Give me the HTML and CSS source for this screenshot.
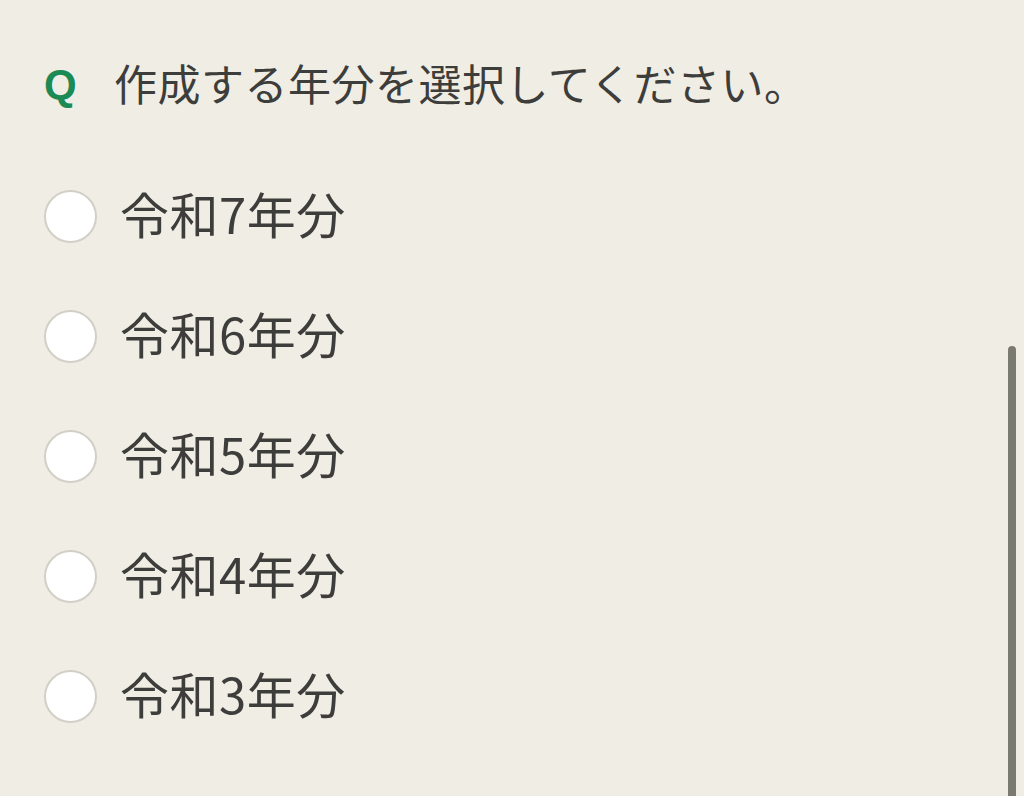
FILE: index.html
```html
<!DOCTYPE html>
<html lang="ja">
<head>
<meta charset="utf-8">
<title>作成する年分</title>
<link rel="stylesheet" href="styles.css">
</head>
<body>
<main class="page">
  <div class="question">
    <span class="q-mark">Q</span>
    <span class="q-text">作成する年分を選択してください。</span>
  </div>
  <ul class="options">
    <li class="option"><span class="radio"></span><span class="label">令和7年分</span></li>
    <li class="option"><span class="radio"></span><span class="label">令和6年分</span></li>
    <li class="option"><span class="radio"></span><span class="label">令和5年分</span></li>
    <li class="option"><span class="radio"></span><span class="label">令和4年分</span></li>
    <li class="option"><span class="radio"></span><span class="label">令和3年分</span></li>
  </ul>
</main>
<div class="scroll-thumb"></div>
</body>
</html>
```
FILE: styles.css
```css
html, body {
  margin: 0;
  padding: 0;
  height: 100%;
  overflow: hidden;
  background: #f0ede4;
}

body {
  font-family: "Noto Sans CJK JP", "Noto Sans", sans-serif;
  color: #3d3d3b;
}

.page {
  padding: 56px 0 0 44px;
}

.question {
  display: flex;
  align-items: center;
  height: 58px;
}

.q-mark {
  font-family: "Liberation Sans", Arial, sans-serif;
  font-weight: 700;
  font-size: 42px;
  color: #1b8a55;
  width: 70px;
}

.q-text {
  font-size: 43px;
  line-height: 1;
  padding-bottom: 6px;
  letter-spacing: 0.5px;
}

.options {
  list-style: none;
  margin: 42px 0 0;
  padding: 0;
}

.option {
  display: flex;
  align-items: center;
  height: 120px;
}

.radio {
  box-sizing: border-box;
  width: 53px;
  height: 53px;
  border-radius: 50%;
  background: #ffffff;
  border: 2px solid #d2cfc7;
  margin-right: 23px;
  flex: none;
}

.label {
  font-size: 49px;
  line-height: 1;
  padding-bottom: 8px;
  letter-spacing: 0.5px;
}

.scroll-thumb {
  position: absolute;
  left: 1008px;
  top: 346px;
  width: 8px;
  height: 470px;
  border-radius: 4px;
  background: #7a7a70;
}
```
